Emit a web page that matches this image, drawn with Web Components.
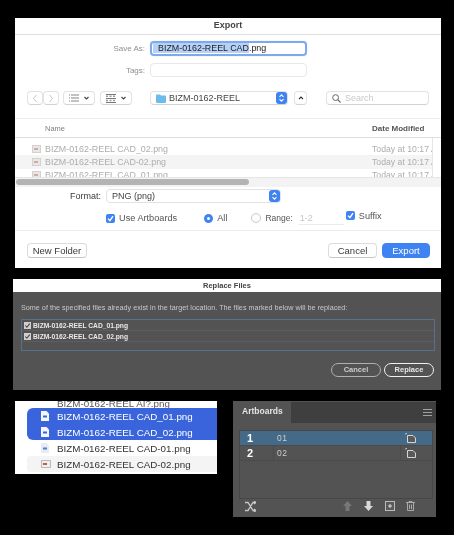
<!DOCTYPE html>
<html><head><meta charset="utf-8"><title>Export</title>
<style>
html,body{margin:0;background:#000;height:100%;overflow:hidden}
body{font-family:"Liberation Sans",Arial,sans-serif;display:flex;flex-direction:column;padding:18px 0 0 13px;box-sizing:border-box}
.bottom{display:flex;gap:16px;margin:11px 0 0 2px;align-items:flex-start}
x-export,x-replace,x-finder,x-artboards{filter:blur(.35px)}
x-export{margin-left:2px}
x-replace{margin-top:11px}
</style></head><body>
<x-export></x-export>
<x-replace></x-replace>
<div class="bottom"><x-finder></x-finder><x-artboards></x-artboards></div>
<script>
const BLUE='#3f82f2';
class Base extends HTMLElement{
  constructor(){super();this.attachShadow({mode:'open'}).innerHTML=this.render();}
  render(){return ''}
}
class XCheck extends Base{render(){return `<style>:host{display:inline-flex;width:9px;height:9px}svg{display:block}</style>
<svg width="9" height="9" viewBox="0 0 9 9"><rect width="9" height="9" rx="2" fill="${BLUE}"/><path d="M2 4.6 3.9 6.7 7 2.2" fill="none" stroke="#fff" stroke-width="1.4"/></svg>`}}
class XPush extends Base{render(){return `<style>:host{display:flex;align-items:center;justify-content:center;box-sizing:border-box;height:15px;border-radius:4px;background:#fff;border:1px solid #dcdcdc;border-bottom-color:#c6c6c6;font-size:9.5px;color:#3a3a3a}
:host([primary]){background:#3f83f3;border-color:#3f83f3;color:#fff}</style><slot></slot>`}}
class XStepper extends Base{render(){return `<style>:host{display:block;width:11px;height:12px}svg{display:block}</style>
<svg width="11" height="12" viewBox="0 0 11 12"><rect width="11" height="12" rx="3" fill="${BLUE}"/><path d="M3.5 4.8 5.5 2.8 7.5 4.8M3.5 7.2 5.5 9.2 7.5 7.2" fill="none" stroke="#fff" stroke-width="1.1"/></svg>`}}
class XFileIcon extends Base{render(){return `<style>:host{display:block;width:9px;height:8px}svg{display:block}</style>
<svg width="9" height="8" viewBox="0 0 9 8"><rect x=".5" y=".5" width="8" height="7" fill="#e9e6e6" stroke="#d2d2d2"/><rect x="2" y="3" width="4" height="2" fill="#d3a9a5"/></svg>`}}
class XExport extends Base{render(){
 const rows=['BIZM-0162-REEL CAD_02.png','BIZM-0162-REEL CAD-02.png','BIZM-0162-REEL CAD_01.png'].map((n,i)=>`<div class="row ${i==1?'alt':''}"><x-file-icon></x-file-icon><span class="fn">${n}</span><span class="dt">Today at 10:17 AM</span></div>`).join('');
 return `<style>
:host{display:block;width:426px;height:250px;background:#fff;box-sizing:border-box;color:#3a3a3a;font-size:9px;overflow:hidden}
*{box-sizing:border-box}
.title{height:17px;border-bottom:1px solid #dedede;text-align:center;font-weight:700;font-size:9px;line-height:15px;color:#444}
.form{display:grid;grid-template-columns:130px 157px;column-gap:5px;row-gap:7px;margin-top:6px;align-items:center}
.lab{text-align:right;font-size:8px;color:#8d8d8d}
.saveas{height:15px;border-radius:4px;border:2px solid #7ea9ee;font-size:8.9px;line-height:11px;padding-left:1px;color:#222;white-space:nowrap;overflow:hidden;box-shadow:0 0 1px #9dbdf2}
.saveas mark{background:#b5d1f8;color:#222;padding-left:5px;padding-right:0}
.tags{height:14px;border-radius:4px;border:1px solid #e8e8e8}
.tools{display:flex;align-items:center;margin:14px 0 0 12px;height:14px}
.tb{display:flex;align-items:center;justify-content:center;box-sizing:border-box;height:14px;border:1px solid #e2e2e2;border-bottom-color:#d2d2d2;border-radius:4px;background:#fff}
.folder{width:138px;margin-left:18px;justify-content:flex-start;padding:0 0 0 5px;gap:3px;position:relative;color:#444;font-size:9px;white-space:nowrap}
.folder x-stepper{margin-left:auto;margin-right:0}
.search{width:103px;margin-left:19px;justify-content:flex-start;padding-left:5px;gap:4px;color:#c9c9c9;font-size:9px}
.list{margin-top:13px;border-top:1px solid #ececec;background:#fff}
.head{height:19px;display:flex;align-items:center;font-size:7.5px;color:#808080;padding-left:30px;border-bottom:1px solid #dedede}
.head b{margin-left:auto;margin-right:10px;color:#555;width:59px;white-space:nowrap;font-size:8px}
.rows{height:39px;width:418px;border-right:1px solid #e6e6e6;overflow:hidden;padding-top:4px}
.row{height:13.3px;display:flex;align-items:center;padding-left:17px;color:#adadad;font-size:8.9px;white-space:nowrap;overflow:hidden}
.row.alt{background:#f4f4f4}
.fn{margin-left:4px;width:327px;flex:none}
.dt{flex:none;font-size:8.7px}
.track{height:10px;background:#f3f3f3;border-top:1px solid #e6e6e6;padding:1px 0 0 1px}
.thumb{width:233px;height:6px;border-radius:3px;background:#b4b4b4}
.fmt{display:flex;align-items:center;margin-top:2px;height:14px}
.fmt .l{width:86px;text-align:right;color:#3a3a3a;font-size:9px}
.pop{width:175px;margin-left:5px;height:14px;border:1px solid #e2e2e2;border-radius:4px;display:flex;align-items:center;justify-content:space-between;padding-left:5px;color:#444;font-size:9px}
.opts{display:flex;align-items:center;height:20px;margin-top:5px;padding-left:91px;color:#555;font-size:9.2px;white-space:nowrap}
.opts span{margin-left:4px}
.radio{width:9px;height:9px;border-radius:50%;flex:none}
.radio.on{background:#fff;border:3px solid ${BLUE}}
.radio.off{border:1px solid #c9c9c9;width:10px;height:10px}
.rng{width:46px;height:14px;margin-left:5px;border-bottom:1px solid #ececec;color:#c4c4c4;font-size:9px;line-height:14px;padding-left:2px;flex:none}
.suf{display:flex;align-items:center;margin:-5px 0 0 2px}
.foot{margin-top:2px;border-top:1px solid #ececec;display:flex;align-items:flex-start;padding:12px 11px 0 12px}
.foot x-push{width:60px}
.foot .c{width:49px;margin-left:auto}
.foot .e{width:48px;margin-left:5px}
</style>
<div class="title">Export</div>
<div class="form">
 <div class="lab">Save As:</div><div class="saveas"><mark>BIZM-0162-REEL CAD</mark>.png</div>
 <div class="lab">Tags:</div><div class="tags"></div>
</div>
<div class="tools">
 <div class="tb" style="width:16px"><svg width="6" height="9" viewBox="0 0 6 9"><path d="M4.5 1 1.5 4.5 4.5 8" fill="none" stroke="#c6c6c6"/></svg></div>
 <div class="tb" style="width:16px"><svg width="6" height="9" viewBox="0 0 6 9"><path d="M1.5 1 4.5 4.5 1.5 8" fill="none" stroke="#c6c6c6"/></svg></div>
 <div class="tb" style="width:32px;margin-left:4px;gap:5px"><svg width="10" height="8" viewBox="0 0 10 8"><path d="M0 1h1M2 1h8M0 4h1M2 4h8M0 7h1M2 7h8" stroke="#666" stroke-width=".8"/></svg><svg width="5" height="4" viewBox="0 0 5 4"><path d="M.5 1 2.5 3 4.5 1" fill="none" stroke="#444" stroke-width="1.1"/></svg></div>
 <div class="tb" style="width:32px;margin-left:5px;gap:5px"><svg width="10" height="9" viewBox="0 0 10 9"><path d="M0 .5h10M0 4.500h10M0 8.500h10" stroke="#777" stroke-width="1"/><path d="M0 2.200h10M0 6.500h10" stroke="#999" stroke-width="1.500" stroke-dasharray="2 1.500"/></svg><svg width="5" height="4" viewBox="0 0 5 4"><path d="M.5 1 2.500 3 4.500 1" fill="none" stroke="#444" stroke-width="1.100"/></svg></div>
 <div class="tb folder"><svg width="10" height="9" viewBox="0 0 10 9"><path d="M0 1.500a1 1 0 0 1 1-1h3l1 1h4a1 1 0 0 1 1 1V8a1 1 0 0 1-1 1H1a1 1 0 0 1-1-1z" fill="#6cbcea"/></svg>BIZM-0162-REEL<x-stepper></x-stepper></div>
 <div class="tb" style="width:13px;margin-left:6px"><svg width="6" height="4" viewBox="0 0 6 4"><path d="M1 3 3 1 5 3" fill="none" stroke="#333" stroke-width="1.100"/></svg></div>
 <div class="tb search"><svg width="9" height="9" viewBox="0 0 9 9"><circle cx="3.600" cy="3.600" r="2.900" fill="none" stroke="#666"/><path d="M5.700 5.700 8.500 8.500" stroke="#666" stroke-width="1.100"/></svg>Search</div>
</div>
<div class="list">
 <div class="head"><span>Name</span><b>Date Modified</b></div>
 <div class="rows">${rows}</div>
 <div class="track"><div class="thumb"></div></div>
</div>
<div class="fmt"><div class="l">Format:</div><div class="pop">PNG (png)<x-stepper></x-stepper></div></div>
<div class="opts"><x-check></x-check><span>Use Artboards</span>
 <div class="radio on" style="margin-left:27px"></div><span>All</span>
 <div class="radio off" style="margin-left:24px"></div><span style="font-size:8.5px">Range:</span><div class="rng">1-2</div>
 <div class="suf"><x-check></x-check><span>Suffix</span></div></div>
<div class="foot"><x-push>New Folder</x-push><x-push class="c">Cancel</x-push><x-push class="e" primary>Export</x-push></div>`}}
class XReplace extends Base{render(){
 const r=n=>`<div class="r"><svg width="7" height="7" viewBox="0 0 8 8"><rect width="8" height="8" fill="#cfcfcf"/><path d="M1.500 4 3.300 6 6.500 1.800" fill="none" stroke="#444" stroke-width="1.200"/></svg><span>${n}</span></div>`;
 return `<style>
:host{display:block;width:428px;height:111px;background:#535353;box-sizing:border-box;font-size:7.2px;color:#c9c9c9;overflow:hidden}
*{box-sizing:border-box}
.t{height:13px;background:#fff;text-align:center;color:#444;font-weight:700;font-size:7.5px;line-height:13px}
.m{margin:11px 0 0 8px;height:10px;line-height:10px;white-space:nowrap;letter-spacing:.02px}
.box{margin:6px 6px 0 8px;height:32px;border:1px solid #56718b}
.r{height:11px;display:flex;align-items:center;gap:2px;padding-left:2px;border-bottom:1px solid #5d5d5d;color:#e9e9e9;font-weight:700;font-size:6.7px;white-space:nowrap}
.bt{display:flex;justify-content:flex-end;gap:3px;margin:12px 7px 0 0}
.b{width:50px;height:14px;border-radius:7px;border:1px solid #b0b0b0;text-align:center;line-height:12px;color:#ccc;font-size:7.500px;font-weight:700}
.b.p{border-color:#f0f0f0;color:#e6e6e6}
</style>
<div class="t">Replace Files</div>
<div class="m">Some of the specified files already exist in the target location. The files marked below will be replaced:</div>
<div class="box">${r('BIZM-0162-REEL CAD_01.png')}${r('BIZM-0162-REEL CAD_02.png')}</div>
<div class="bt"><div class="b">Cancel</div><div class="b p">Replace</div></div>`}}
class XFinder extends Base{render(){
 const doc=(f,m)=>`<svg width="8" height="10" viewBox="0 0 8 10"><path d="M0 0h5.500L8 2.500V10H0z" fill="${f}"/><rect x="2" y="4.500" width="4" height="2" fill="${m}"/></svg>`;
 const pic=`<svg width="10" height="8" viewBox="0 0 10 8"><rect x=".5" y=".5" width="9" height="7" fill="#eee" stroke="#bbb"/><rect x="2" y="3" width="4" height="2" fill="#c65a50"/></svg>`;
 return `<style>
:host{display:block;width:202px;height:73px;background:#fff;overflow:hidden;font-size:9.8px;color:#333}
*{box-sizing:border-box}
.r{height:16px;display:flex;align-items:center;margin-left:12px;padding-left:14px;white-space:nowrap}
.ic{width:16px;display:flex;justify-content:flex-start}
.s{background:#3a64dc;color:#fff}
.s1{border-radius:6px 0 0 0}.s2{border-radius:0 0 0 6px}
.g{background:#f4f4f4;border-radius:3px 0 0 3px}
.clip{height:7px;display:flex;align-items:flex-end;padding-left:42px;line-height:9px;overflow:hidden;white-space:nowrap;color:#555}
</style>
<div class="clip">BIZM-0162-REEL AI?.png</div>
<div class="r s s1"><span class="ic">${doc('#f4f7fe','#3a67e0')}</span>BIZM-0162-REEL CAD_01.png</div>
<div class="r s s2"><span class="ic">${doc('#f4f7fe','#3a67e0')}</span>BIZM-0162-REEL CAD_02.png</div>
<div class="r"><span class="ic">${doc('#e6ebf5','#5b7fc0')}</span>BIZM-0162-REEL CAD-01.png</div>
<div class="r g"><span class="ic">${pic}</span>BIZM-0162-REEL CAD-02.png</div>`}}
class XArtboards extends Base{render(){
 const ico=`<svg width="12" height="10" viewBox="0 0 12 10"><path d="M2.500 2.500H8L10.500 5v4.500h-8z" fill="#5a5a5a" stroke="#d5d5d5"/><path d="M0 1h1M1.500 0v1" stroke="#ddd" stroke-width=".8"/></svg>`;
 const row=(n,l,c)=>`<div class="row ${c}"><b>${n}</b><span>${l}</span><i>${ico}</i></div>`;
 return `<style>
:host{display:block;width:203px;height:116px;background:#535353;box-sizing:border-box;overflow:hidden;color:#ddd}
*{box-sizing:border-box}
.tabs{height:21px;background:#3f3f3f;display:flex;margin-top:1px;align-items:center;padding-right:4px;justify-content:space-between}
.tab{width:58px;height:21px;background:#535353;font-weight:700;font-size:8.500px;line-height:19px;padding-left:9px;color:#e4e4e4}
.list{margin:7px 3px 0 6px;height:69px;border:1px solid #474747}
.row{height:15px;display:grid;grid-template-columns:33px 127px 1fr;align-items:center;border-bottom:1px solid #4a4a4a}
.row.sel{background:#456a87}
.row b{padding-left:7px;font-size:11px;color:#fff}
.row span{padding-left:3px;font-size:8.500px;letter-spacing:.4px;color:#ccc;border-left:1px solid #4a4a4a;line-height:14px;height:14px}
.row i{display:flex;padding-left:4px;height:14px;align-items:center;border-left:1px solid #4a4a4a}
.sel span,.sel i{border-color:#456a87}
.foot{display:flex;align-items:center;height:14px;padding-left:12px}
.foot svg{display:block}
</style>
<div class="tabs"><div class="tab">Artboards</div><svg width="9" height="7" viewBox="0 0 9 7"><path d="M0 .5h9M0 3.500h9M0 6.500h9" stroke="#a0a0a0"/></svg></div>
<div class="list">${row(1,'01','sel')}${row(2,'02','')}</div>
<div class="foot">
 <svg width="11" height="11" viewBox="0 0 11 11"><path d="M0 1.500h3l5 8h3M0 9.500h3l5-8h3M9 0l2 1.500L9 3M9 8l2 1.500L9 11" fill="none" stroke="#c8c8c8" stroke-width="1.300"/></svg>
 <svg style="margin-left:87px" width="9" height="10" viewBox="0 0 9 10"><path d="M4.500 0 9 5H6.500v5h-4V5H0z" fill="#777"/></svg>
 <svg style="margin-left:12px" width="9" height="10" viewBox="0 0 9 10"><path d="M4.500 10 9 5H6.500V0h-4v5H0z" fill="#d8d8d8"/></svg>
 <svg style="margin-left:12px" width="10" height="10" viewBox="0 0 10 10"><rect x=".5" y=".5" width="9" height="9" fill="#5a5a5a" stroke="#bbb"/><path d="M5 3v4M3 5h4" stroke="#ddd"/></svg>
 <svg style="margin-left:11px" width="9" height="10" viewBox="0 0 9 10"><path d="M0 1.500h9M3 1.500V.5h3v1M1.500 2v7.500h6V2M3.500 3.500v4.500M5.500 3.500v4.500" fill="none" stroke="#aaa"/></svg>
</div>`}}
[['x-check',XCheck],['x-push',XPush],['x-stepper',XStepper],['x-file-icon',XFileIcon],['x-export',XExport],['x-replace',XReplace],['x-finder',XFinder],['x-artboards',XArtboards]].forEach(([n,c])=>customElements.define(n,c));
</script>
</body></html>
